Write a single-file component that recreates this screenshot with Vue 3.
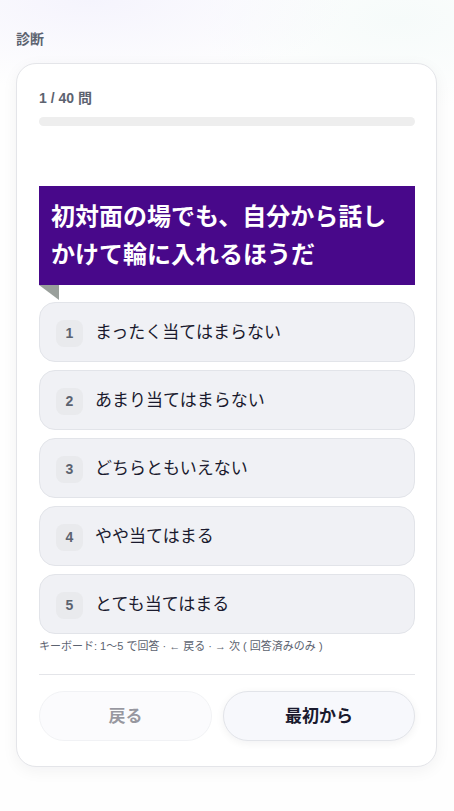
<template>
  <main class="page">
    <h1 class="page-title">診断</h1>

    <section class="card">
      <div class="progress">
        <label for="progress" class="progress-label">{{ current }} / {{ total }} 問</label>
        <progress id="progress" class="progress-bar" :value="answered" :max="total"></progress>
      </div>

      <h2 class="question">初対面の場でも、自分から話しかけて輪に入れるほうだ</h2>

      <div class="options">
        <button
          v-for="(label, i) in options"
          :key="label"
          type="button"
          class="option"
          @click="answer(i + 1)"
        >
          <span class="option-num">{{ i + 1 }}</span>
          <span>{{ label }}</span>
        </button>
      </div>

      <p class="hint">キーボード: 1〜5 で回答 · ← 戻る · → 次 ( 回答済みのみ )</p>

      <div class="actions">
        <button type="button" class="action" :disabled="current === 1" @click="current--">戻る</button>
        <button type="button" class="action" @click="restart">最初から</button>
      </div>
    </section>
  </main>
</template>

<script setup>
import { ref } from 'vue'

const total = 40
const current = ref(1)
const answered = ref(0)
const options = [
  'まったく当てはまらない',
  'あまり当てはまらない',
  'どちらともいえない',
  'やや当てはまる',
  'とても当てはまる',
]

const answer = () => {
  answered.value = Math.max(answered.value, current.value)
  if (current.value < total) current.value++
}

const restart = () => {
  current.value = 1
  answered.value = 0
}
</script>

<style>
body {
  margin: 0;
  background: #fefefe;
}
</style>

<style scoped>
.page {
  box-sizing: border-box;
  padding: 28px 17px 44px 16px;
  font-family: "Liberation Sans", "Noto Sans CJK JP", sans-serif;
  color: #1a1a2e;
  background:
    radial-gradient(ellipse 260px 90px at 20% 0, #f5f4fd, transparent),
    radial-gradient(ellipse 200px 90px at 88% 20px, #f6fbfa, transparent);
}

.page-title {
  margin: 0 0 13px;
  font-size: 14px;
  line-height: 22px;
  font-weight: 700;
  color: #5c6370;
}

.card {
  padding: 22px 21px 25px 22px;
  background: #fff;
  border: 1px solid #e4e5e9;
  border-radius: 20px;
  box-shadow: 0 4px 16px rgba(20, 20, 40, 0.05);
}

.progress-label {
  display: block;
  margin-bottom: 6px;
  font-size: 14px;
  line-height: 25px;
  font-weight: 700;
  color: #5c6370;
}

.progress-bar {
  display: block;
  width: 100%;
  height: 9px;
  border: 0;
  border-radius: 9px;
  overflow: hidden;
  appearance: none;
  background: #eeeeee;
}

.progress-bar::-webkit-progress-bar {
  background: #eeeeee;
}

.progress-bar::-webkit-progress-value {
  background: #4b0a8a;
}

.question {
  position: relative;
  margin: 60px 0 17px;
  padding: 12px 12px 11px;
  font-size: 24px;
  line-height: 38px;
  font-weight: 700;
  color: #fff;
  background: #48088a;
}

/* folded corner of the ribbon */
.question::after {
  content: "";
  position: absolute;
  top: 100%;
  left: 0;
  width: 20px;
  height: 15px;
  background: #999f9b;
  clip-path: polygon(0 0, 100% 0, 100% 100%);
}

.options {
  display: grid;
  gap: 8px;
}

.option {
  display: flex;
  align-items: center;
  gap: 12px;
  min-height: 60px;
  padding: 2px 16px 0;
  font: inherit;
  font-size: 17px;
  line-height: 26px;
  text-align: left;
  color: inherit;
  background: #f0f1f5;
  border: 1px solid #e2e4e9;
  border-radius: 16px;
  cursor: pointer;
}

.option-num {
  width: 27px;
  flex: none;
  font-size: 14px;
  line-height: 27px;
  font-weight: 700;
  text-align: center;
  color: #5c6370;
  background: #e9eaed;
  border-radius: 8px;
}

.hint {
  margin: 2px 0 18px;
  font-size: 11px;
  line-height: 20px;
  color: #5c6370;
}

.actions {
  display: grid;
  grid-template-columns: 9fr 10fr;
  gap: 11px;
  padding-top: 16px;
  border-top: 1px solid #e4e5e9;
}

.action {
  min-height: 50px;
  padding: 2px 16px 0;
  font: inherit;
  font-size: 17px;
  line-height: 26px;
  font-weight: 700;
  color: inherit;
  background: #f7f8fc;
  border: 1px solid #e2e4e9;
  border-radius: 25px;
  box-shadow: 0 2px 8px rgba(20, 20, 40, 0.06);
  cursor: pointer;
}

.action:disabled {
  opacity: 0.45;
  box-shadow: none;
  cursor: default;
}
</style>
